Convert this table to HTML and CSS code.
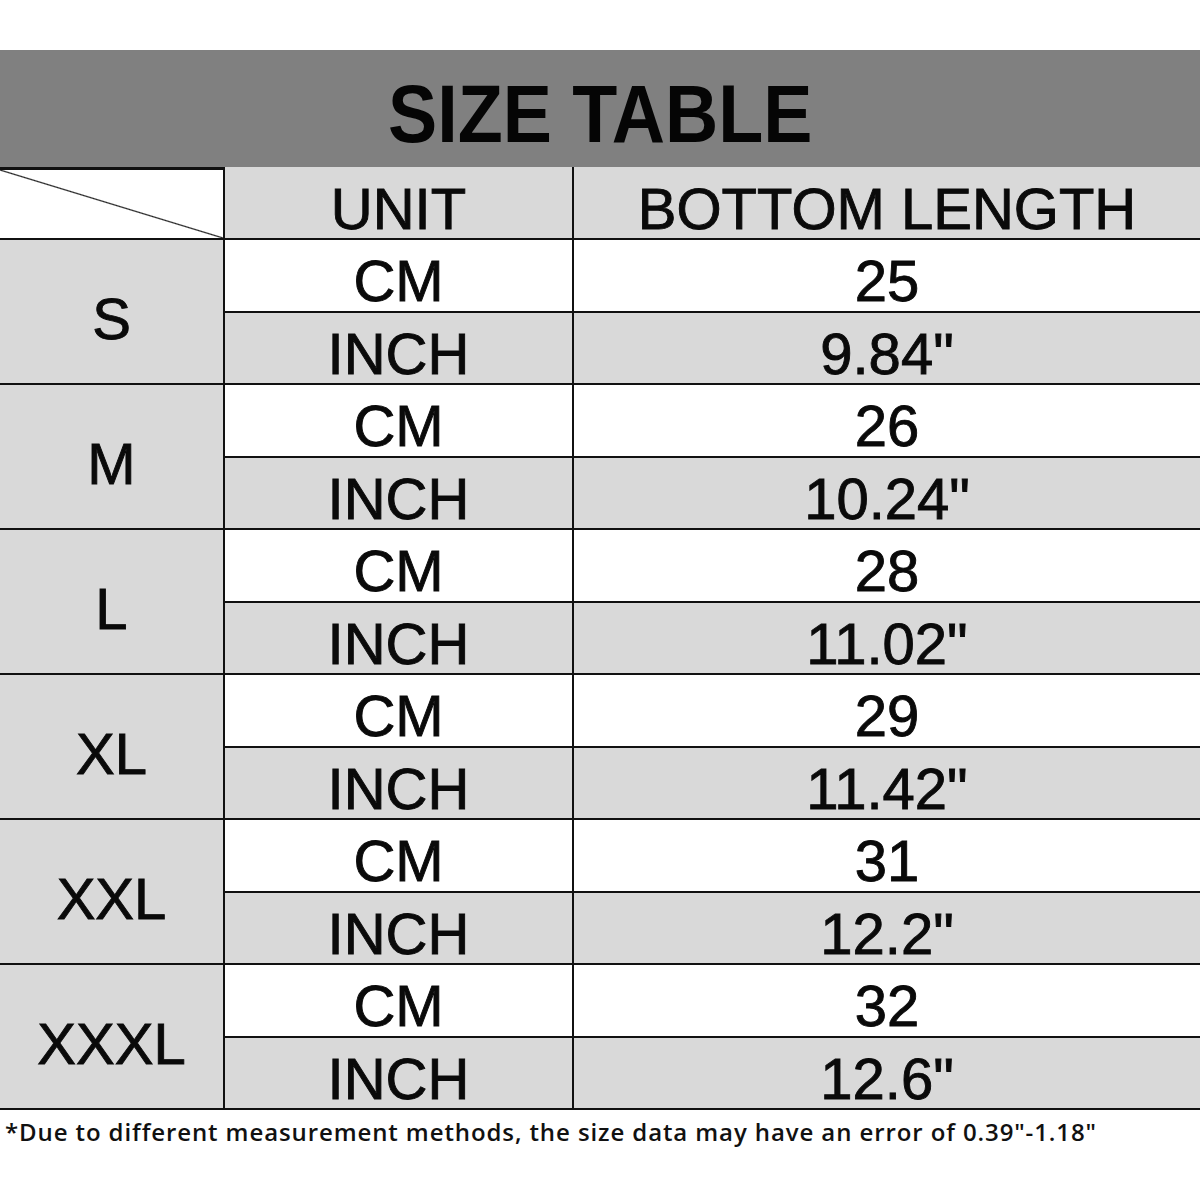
FILE: index.html
```html
<!DOCTYPE html>
<html lang="en">
<head>
<meta charset="utf-8">
<title>Size Table</title>
<link rel="stylesheet" href="styles.css">
</head>
<body>
<div class="page">
  <div class="title-band"><h1 class="title">SIZE TABLE</h1></div>
  <div class="grid">
    <div class="cell corner"></div>
    <div class="cell head">UNIT</div>
    <div class="cell head">BOTTOM LENGTH</div>

    <div class="cell size">S</div>
    <div class="cell unit">CM</div><div class="cell val">25</div>
    <div class="cell unit alt">INCH</div><div class="cell val alt">9.84"</div>

    <div class="cell size">M</div>
    <div class="cell unit">CM</div><div class="cell val">26</div>
    <div class="cell unit alt">INCH</div><div class="cell val alt">10.24"</div>

    <div class="cell size">L</div>
    <div class="cell unit">CM</div><div class="cell val">28</div>
    <div class="cell unit alt">INCH</div><div class="cell val alt">11.02"</div>

    <div class="cell size">XL</div>
    <div class="cell unit">CM</div><div class="cell val">29</div>
    <div class="cell unit alt">INCH</div><div class="cell val alt">11.42"</div>

    <div class="cell size">XXL</div>
    <div class="cell unit">CM</div><div class="cell val">31</div>
    <div class="cell unit alt">INCH</div><div class="cell val alt">12.2"</div>

    <div class="cell size">XXXL</div>
    <div class="cell unit">CM</div><div class="cell val">32</div>
    <div class="cell unit alt">INCH</div><div class="cell val alt">12.6"</div>
  </div>
  <p class="note">*Due to different measurement methods, the size data may have an error of 0.39"-1.18"</p>
</div>
</body>
</html>
```
FILE: styles.css
```css
html, body {
  margin: 0;
  padding: 0;
  background: #ffffff;
}
body {
  width: 1200px;
  height: 1200px;
  overflow: hidden;
  font-family: "Liberation Sans", Arial, sans-serif;
  color: #0a0a0a;
}
.page {
  padding-top: 50px;
}
.title-band {
  height: 117px;
  background: #808080;
  display: flex;
  align-items: center;
  justify-content: center;
}
.title {
  margin: 0;
  padding-top: 11px;
  font-size: 81px;
  font-weight: 700;
  letter-spacing: 0;
  line-height: 1;
  color: #050505;
  transform: scaleX(0.91);
}
.grid {
  display: grid;
  grid-template-columns: 223px 347px 626px;
  grid-template-rows: 71px repeat(12, 70.5px);
  column-gap: 2px;
  row-gap: 2px;
  background: #111111;
  border-bottom: 2px solid #111111;
  width: 1200px;
}
.cell {
  display: flex;
  align-items: center;
  justify-content: center;
  padding-top: 12px;
  box-sizing: border-box;
  font-size: 58px;
  line-height: 1;
  -webkit-text-stroke: 0.9px #0a0a0a;
  background: #ffffff;
}
.corner {
  background: linear-gradient(to top right, #ffffff calc(50% - 1.2px), #222222 50%, #ffffff calc(50% + 1.2px));
  margin-top: 3px;
}
.head {
  background: #d9d9d9;
}
.size {
  grid-row: span 2;
  grid-column: 1;
  background: #d9d9d9;
  padding-top: 14px;
}
.unit.alt, .val.alt {
  background: #d9d9d9;
}
.note {
  margin: 5px 0 0 5px;
  font-family: "Open Sans", "Liberation Sans", sans-serif;
  font-size: 24px;
  font-weight: 600;
  letter-spacing: 0.9px;
  color: #111111;
  white-space: nowrap;
}
```
